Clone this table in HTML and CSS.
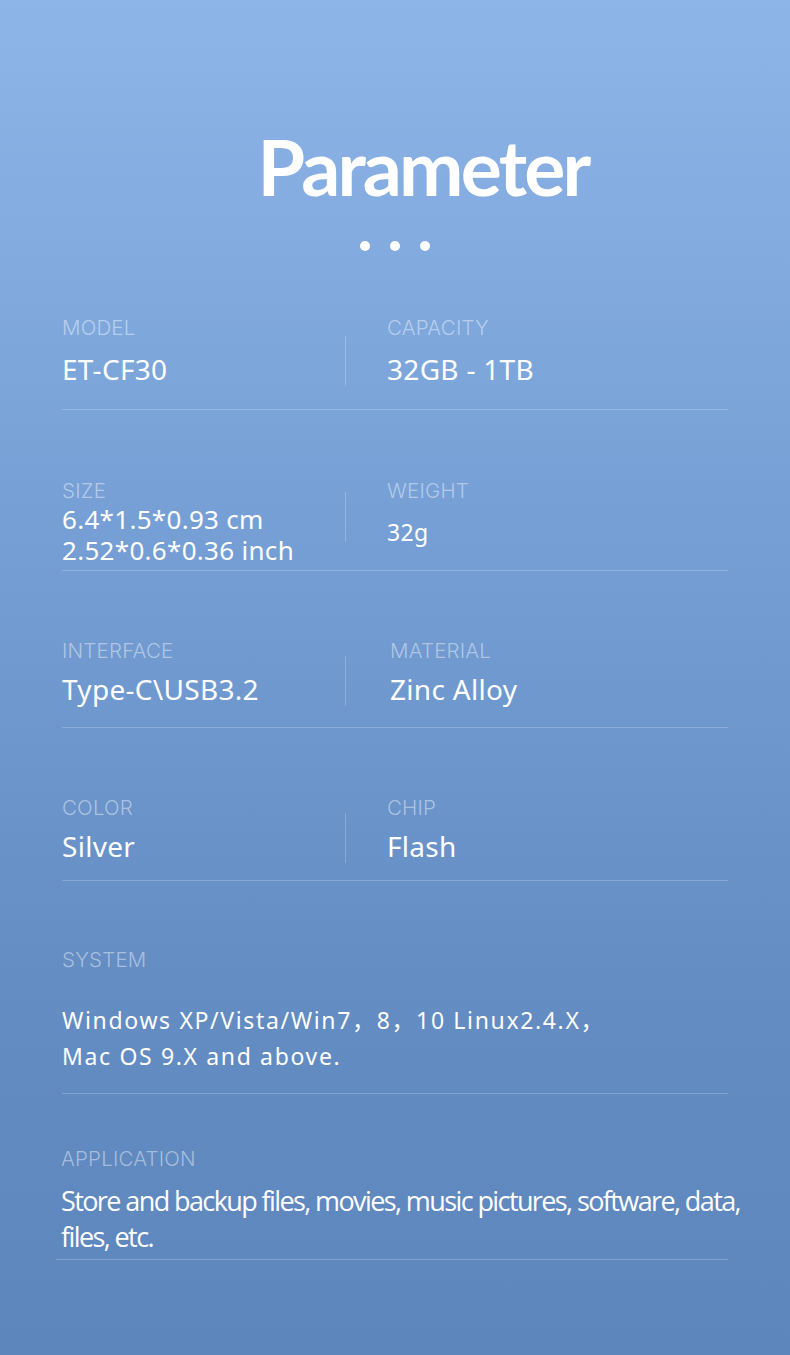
FILE: index.html
```html
<!DOCTYPE html>
<html>
<head>
<meta charset="utf-8">
<link rel="stylesheet" href="styles.css">
</head>
<body>
<div class="page">
  <h1 class="title">Parameter</h1>
  <div class="dots"><span></span><span></span><span></span></div>
  <div class="specs">
    <div class="row row-first">
      <div class="cell"><div class="label">MODEL</div><div class="value">ET-CF30</div></div>
      <div class="divider"></div>
      <div class="cell right"><div class="label">CAPACITY</div><div class="value">32GB - 1TB</div></div>
    </div>
    <div class="row row-size">
      <div class="cell"><div class="label">SIZE</div><div class="value multi"><div class="line">6.4*1.5*0.93 cm</div><div class="line">2.52*0.6*0.36 inch</div></div></div>
      <div class="divider"></div>
      <div class="cell right"><div class="label">WEIGHT</div><div class="value small">32g</div></div>
    </div>
    <div class="row row-third">
      <div class="cell"><div class="label">INTERFACE</div><div class="value">Type-C\USB3.2</div></div>
      <div class="divider"></div>
      <div class="cell right shift"><div class="label">MATERIAL</div><div class="value">Zinc Alloy</div></div>
    </div>
    <div class="row row-fourth">
      <div class="cell"><div class="label">COLOR</div><div class="value">Silver</div></div>
      <div class="divider"></div>
      <div class="cell right"><div class="label">CHIP</div><div class="value">Flash</div></div>
    </div>
    <div class="block system">
      <div class="label">SYSTEM</div>
      <div class="sys-text">Windows XP/Vista/Win7，8，10 Linux2.4.X，<br>Mac OS 9.X and above.</div>
    </div>
    <div class="block app">
      <div class="label">APPLICATION</div>
      <div class="app-text">Store and backup files, movies, music pictures, software, data, files, etc.</div>
    </div>
  </div>
</div>
</body>
</html>
```
FILE: styles.css
```css
* { box-sizing: border-box; margin: 0; padding: 0; }
html, body { width: 790px; height: 1355px; overflow: hidden; }
body { font-family: "Noto Sans", "Noto Sans CJK SC", sans-serif; color: #fff; }
.page {
  width: 790px;
  height: 1355px;
  background: linear-gradient(180deg, #8eb5e8 0%, #7ea7dc 25%, #6f99cf 50%, #648dc4 72%, #5d86bd 100%);
  padding-top: 121px;
}
.title {
  font-family: Lato, sans-serif;
  font-weight: 700;
  font-size: 77px;
  line-height: 90px;
  letter-spacing: -2.8px;
  text-align: center;
  padding-left: 56px;
}
.dots {
  display: flex;
  justify-content: center;
  gap: 20px;
  margin-top: 30px;
}
.dots span {
  width: 10px;
  height: 10px;
  border-radius: 50%;
  background: #fff;
}
.specs {
  margin: 0 62px;
  width: 666px;
}
.row {
  display: grid;
  grid-template-columns: 283px 1px 1fr;
  border-bottom: 1px solid rgba(255,255,255,0.22);
  padding-top: 68px;
  padding-bottom: 21px;
}
.row-first { padding-top: 65px; padding-bottom: 22px; }
.row-size { padding-top: 69px; padding-bottom: 4px; }
.row-third { padding-top: 68px; padding-bottom: 20px; }
.row-fourth { padding-top: 68px; padding-bottom: 16px; }
.row-third .value, .row-fourth .value { margin-top: 8px; }
.cell.right { padding-left: 41px; }
.cell.shift { padding-left: 44px; }
.divider {
  width: 1px;
  height: 50px;
  align-self: end;
  margin-bottom: 1px;
  background: rgba(255,255,255,0.22);
}
.row-size .divider { margin-bottom: 24px; }
.label {
  font-family: Inter, sans-serif;
  font-weight: 300;
  font-size: 20.5px;
  line-height: 24px;
  color: rgba(255,255,255,0.45);
  letter-spacing: 0.2px;
}
.value {
  font-size: 28px;
  line-height: 36px;
  margin-top: 9px;
  letter-spacing: 0.3px;
}
.row-first .value { margin-top: 11px; }
.value.multi {
  font-size: 26px;
  line-height: 31px;
  margin-top: 1px;
}
.value.multi .line { height: 31px; }
.value.small {
  font-size: 23px;
  margin-top: 11px;
}
.block {
  border-bottom: 1px solid rgba(255,255,255,0.22);
}
.system { padding-top: 67px; padding-bottom: 19px; }
.sys-text {
  margin-top: 30px;
  font-size: 23px;
  line-height: 36px;
  letter-spacing: 1.65px;
}
.app { padding-top: 53px; padding-bottom: 4px; margin-left: -6px; padding-left: 6px; }
.app .label { margin-left: -1px; }
.app-text {
  margin-top: 12px;
  margin-left: -1px;
  margin-right: -12px;
  font-family: "Open Sans", sans-serif;
  font-size: 27px;
  line-height: 36px;
  letter-spacing: -1.6px;
}
```
